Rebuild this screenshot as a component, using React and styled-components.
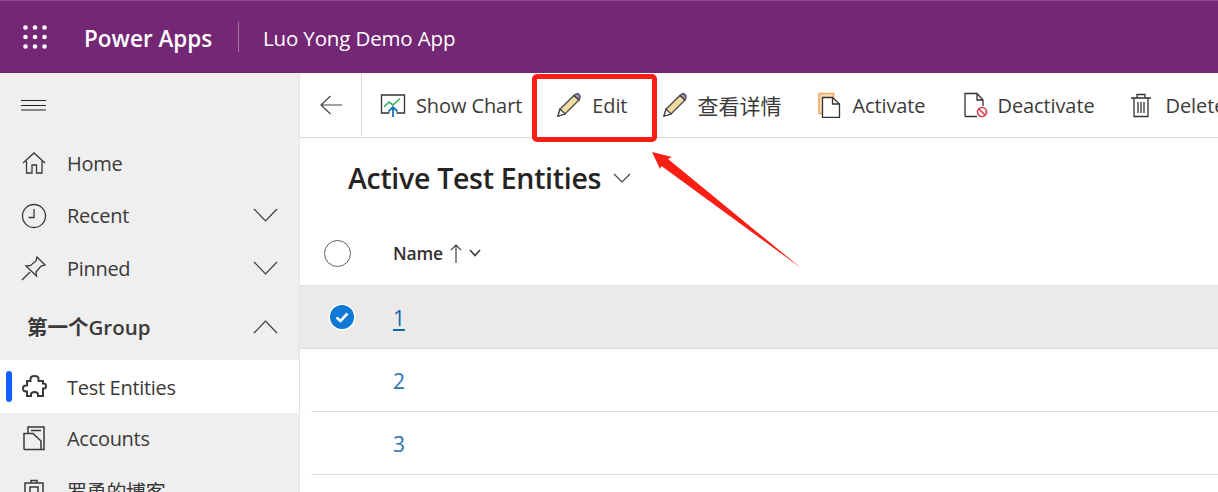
import React from "react";
import styled, { createGlobalStyle } from "styled-components";

const Global = createGlobalStyle`
  html, body { margin: 0; padding: 0; background: #fff; overflow: hidden; }
  * { box-sizing: border-box; }
  body { font-family: "Open Sans", "Noto Sans", "Noto Sans CJK SC", sans-serif; }
`;

const Page = styled.div`
  position: relative;
  width: 1218px;
  height: 492px;
  overflow: hidden;
  display: flex;
  flex-direction: column;
`;
const Header = styled.header`
  flex: 0 0 73px;
  background: #742774;
  border-top: 1px solid #8a4f8a;
  display: flex;
  align-items: center;
  color: #fff;
`;
const Waffle = styled.div`
  width: 70px;
  display: flex;
  justify-content: center;
`;
const Brand = styled.div`
  font-size: 22.5px;
  font-weight: 600;
  letter-spacing: 0;
  width: 168px;
  padding-left: 14px;
  padding-top: 2px;
  white-space: nowrap;
`;
const HeaderRule = styled.div`
  width: 1px;
  height: 30px;
  background: #a877a8;
  margin-right: 24px;
`;
const AppName = styled.div`
  font-size: 20.5px;
  letter-spacing: -0.15px;
  padding-top: 1px;
  white-space: nowrap;
`;
const Body = styled.div`
  flex: 1;
  display: flex;
  min-height: 0;
`;
const Sidebar = styled.nav`
  flex: 0 0 300px;
  background: #efefef;
  border-right: 1px solid #e4e4e4;
  display: flex;
  flex-direction: column;
  color: #3b3a39;
`;
const Burger = styled.div`
  flex: 0 0 64px;
  padding-left: 21px;
  display: flex;
  align-items: center;
`;
const NavRow = styled.div`
  flex: 0 0 ${p => p.$h || 52.5}px;
  position: relative;
  display: flex;
  align-items: center;
  padding-left: 21px;
  background: ${p => (p.$active ? "#fff" : "transparent")};
  padding-top: ${p => (p.$active ? 2 : 0)}px;
  font-size: 20px;
  letter-spacing: -0.3px;
  white-space: nowrap;
`;
const ActiveBar = styled.span`
  position: absolute;
  left: 6px;
  top: 11px;
  width: 6px;
  height: 31px;
  border-radius: 3px;
  background: #0f62fe;
`;
const NavIcon = styled.span`
  width: 26px;
  height: 26px;
  margin-right: 20px;
  display: flex;
  align-items: center;
  justify-content: center;
`;
const NavChevron = styled.span`
  margin-left: auto;
  margin-right: 21px;
  display: flex;
`;
const GroupRow = styled(NavRow)`
  padding-left: 27px;
  padding-bottom: 2px;
  font-size: 20.5px;
  font-weight: 600;
  letter-spacing: 0;
  flex-basis: 65px;
`;
const Main = styled.main`
  flex: 1;
  min-width: 0;
  display: flex;
  flex-direction: column;
`;
const CommandBar = styled.div`
  flex: 0 0 65px;
  border-bottom: 1px solid #d8d8d8;
  display: flex;
  align-items: center;
  font-size: 20px;
  color: #3b3a39;
  white-space: nowrap;
`;
const Back = styled.div`
  flex: 0 0 62px;
  height: 62px;
  border-right: 1px solid #d8d8d8;
  display: flex;
  align-items: center;
  justify-content: center;
`;
const Command = styled.div`
  flex: none;
  display: flex;
  align-items: center;
  gap: ${p => p.$gap || 9}px;
  margin-left: ${p => p.$ml || 0}px;
  letter-spacing: -0.1px;
`;
const CjkLabel = styled.span`
  font-size: 21px;
  letter-spacing: 0;
`;
const ViewTitle = styled.div`
  height: 82px;
  padding-left: 48px;
  display: flex;
  align-items: center;
  gap: 12px;
  font-size: 28.5px;
  font-weight: 600;
  letter-spacing: -0.3px;
  color: #252423;
  padding-bottom: 2px;
`;
const ColumnHead = styled.div`
  flex: 0 0 65px;
  padding-top: 1px;
  display: flex;
  align-items: center;
  font-size: 17.5px;
  font-weight: 600;
  letter-spacing: -0.2px;
  color: #323130;
`;
const HeadCircle = styled.span`
  width: 27px;
  height: 27px;
  margin-left: 24px;
  margin-right: 42px;
  border-radius: 50%;
  border: 1.6px solid #605e5c;
`;
const Row = styled.div`
  flex: 0 0 ${p => (p.$selected ? 64 : 63)}px;
  margin-left: ${p => (p.$selected ? 0 : 11)}px;
  padding-left: ${p => (p.$selected ? 30 : 0)}px;
  background: ${p => (p.$selected ? "#ebeae9" : "#fff")};
  border-top: ${p => (p.$selected ? "1px solid #e0e0e0" : "0")};
  border-bottom: 1px solid #dcdcdc;
  display: flex;
  align-items: center;
  font-size: 21px;
  color: ${p => (p.$selected ? "#1467a8" : "#2f73b5")};
`;
const Check = styled.span`
  flex: none;
  width: 24px;
  height: 24px;
  margin-right: 39px;
  display: flex;
  border-radius: 50%;
  box-shadow: 0 0 0 1.5px #fff;
`;
const RowLink = styled.span`
  margin-left: ${p => (p.$selected ? 0 : 82)}px;
  padding-top: 2px;
  text-decoration: ${p => (p.$selected ? "underline" : "none")};
  text-underline-offset: 3px;
`;
const Highlight = styled.div`
  position: absolute;
  left: 532px;
  top: 74px;
  width: 125px;
  height: 68px;
  border: 5px solid #fa1e14;
  border-radius: 5px;
  pointer-events: none;
`;
const Arrow = styled.svg`
  position: absolute;
  left: 650px;
  top: 150px;
`;

const Svg = ({ s = 26, children, ...r }) => (
  <svg width={s} height={s} viewBox="0 0 26 26" fill="none" stroke="#3b3a39" strokeWidth="1.3" {...r}>
    {children}
  </svg>
);
const Chevron = ({ up }) => (
  <svg width="25" height="15" viewBox="0 0 25 15" fill="none" stroke="#3b3a39" strokeWidth="1.2">
    <path d={up ? "M1 14 12.500 2 24 14" : "M1 1 12.500 13 24 1"} />
  </svg>
);
const Pencil = () => (
  <Svg>
    <path d="M3 24 5 17 19 3.500 24 8 10 22Z" fill="#f0dca0" stroke="#444" />
    <path d="M19 3.500 21 2Q22.500 1 24 2.500T24.800 6L24 8Z" fill="#a78fc0" stroke="#444" />
    <path d="M3 24 5 17 10 22Z" fill="#fff" stroke="#444" />
  </Svg>
);
const pts = [2.5, 12, 21.5];

export default function App() {
  return (
    <Page>
      <Global />
      <Header>
        <Waffle>
          <svg width="24" height="24" viewBox="0 0 24 24" fill="#fff">
            {pts.flatMap(y => pts.map(x => <circle key={x + "-" + y} cx={x} cy={y} r="2.3" />))}
          </svg>
        </Waffle>
        <Brand>Power Apps</Brand>
        <HeaderRule />
        <AppName>Luo Yong Demo App</AppName>
      </Header>
      <Body>
        <Sidebar>
          <Burger>
            <svg width="25" height="12" viewBox="0 0 25 12" stroke="#222" strokeWidth="1">
              <path d="M0 1.500H25M0 6.500H25M0 11H25" />
            </svg>
          </Burger>
          <NavRow>
            <NavIcon>
              <Svg><path d="M2 13 13 3 24 13M5.500 11V23H11V15H15.500V23H21V11" /></Svg>
            </NavIcon>
            Home
          </NavRow>
          <NavRow>
            <NavIcon>
              <Svg><circle cx="13" cy="13" r="11.500" /><path d="M13 6V14.500H7.500" /></Svg>
            </NavIcon>
            Recent
            <NavChevron><Chevron /></NavChevron>
          </NavRow>
          <NavRow>
            <NavIcon>
              <Svg><path d="M1 25 9 17M16 2 24 10 20 11 15 17 15.500 21 5 11 9.500 10.500 15 6Z" /></Svg>
            </NavIcon>
            Pinned
            <NavChevron><Chevron /></NavChevron>
          </NavRow>
          <GroupRow>
            第一个Group
            <NavChevron><Chevron up /></NavChevron>
          </GroupRow>
          <NavRow $active $h={53}>
            <ActiveBar />
            <NavIcon>
              <Svg strokeWidth="2"><path d="M6 7H9.500V5Q9.500 2 13.500 2T17.500 5V7H22V9.500H23Q25 9.500 25 12T23 14.500H22V22H17V20.500Q17 18 13.500 18T10 20.500V22H6V17.500H5Q2 17.500 2 14.500T5 11.500H6Z" /></Svg>
            </NavIcon>
            Test Entities
          </NavRow>
          <NavRow>
            <NavIcon>
              <Svg strokeWidth="1.5"><path d="M3 23.500H23V1H7V7.500M3 23.500V7.500H12L20 15V23.500M10 4.500H20" /></Svg>
            </NavIcon>
            Accounts
          </NavRow>
          <NavRow>
            <NavIcon>
              <Svg strokeWidth="1.5"><path d="M4 5H22V26H4ZM10 5V2.500H16V5M9 9H17V15H9Z" /></Svg>
            </NavIcon>
            罗勇的博客
          </NavRow>
        </Sidebar>
        <Main>
          <CommandBar>
            <Back>
              <svg width="22" height="20" viewBox="0 0 22 20" fill="none" stroke="#444" strokeWidth="1.2">
                <path d="M10.500 1 1 10 10.500 19M1 10H22" />
              </svg>
            </Back>
            <Command $ml={18} $gap={10}>
              <Svg>
                <path d="M9.500 21H1.500V3H24.500V21H16.500" stroke="#333" />
                <path d="M4 15 9 10 13 13 20 6.500" stroke="#35b05a" strokeWidth="1.600" />
                <path d="M13 25V15M8.500 19.500 13 15 17.500 19.500" stroke="#1a6fb5" strokeWidth="1.800" />
              </Svg>
              Show Chart
            </Command>
            <Command $ml={33} $gap={11}><Pencil />Edit</Command>
            <Command $ml={34} $gap={10}><Pencil /><CjkLabel>查看详情</CjkLabel></Command>
            <Command $ml={37} $gap={8}>
              <Svg>
                <rect x="1" y="1.500" width="14.500" height="20" stroke="#eeab66" strokeWidth="1.600" fill="#f8dcb4" />
                <path d="M4.500 5.500H14.500L21.500 12V25.500H4.500Z" fill="#fff" stroke="#333" />
                <path d="M14.500 5.500V12H21.500" stroke="#333" />
              </Svg>
              Activate
            </Command>
            <Command $ml={38} $gap={8}>
              <Svg>
                <path d="M2 24.500V1.500H14L20 8V14M14 1.500V8H20M2 24.500H14" stroke="#333" />
                <circle cx="19" cy="20" r="4.500" stroke="#d9434e" strokeWidth="1.700" />
                <path d="M16 17 22 23" stroke="#d9434e" strokeWidth="1.700" />
              </Svg>
              Deactivate
            </Command>
            <Command $ml={33} $gap={12}>
              <Svg>
                <path d="M3 6H23M9 6V2.500H17V6M6 6V24.500H20V6M10 10V21M13 10V21M16 10V21" stroke="#333" />
              </Svg>
              Delete
            </Command>
          </CommandBar>
          <ViewTitle>
            Active Test Entities
            <svg width="18" height="10" viewBox="0 0 18 10" fill="none" stroke="#444" strokeWidth="1.200">
              <path d="M1 1 9 9 17 1" />
            </svg>
          </ViewTitle>
          <ColumnHead>
            <HeadCircle />
            Name
            <svg style={{ marginLeft: 7 }} width="12" height="19" viewBox="0 0 12 19" fill="none" stroke="#444" strokeWidth="1.200">
              <path d="M6 19V1M1 6 6 1 11 6" />
            </svg>
            <svg style={{ marginLeft: 7 }} width="12" height="8" viewBox="0 0 12 8" fill="none" stroke="#444" strokeWidth="1.800">
              <path d="M1 1 6 6.500 11 1" />
            </svg>
          </ColumnHead>
          <Row $selected>
            <Check>
              <svg width="24" height="24" viewBox="0 0 24 24">
                <circle cx="12" cy="12" r="12" fill="#0f78d4" />
                <path d="M6.500 12.500 10.500 16 17.500 8.500" fill="none" stroke="#fff" strokeWidth="2.600" />
              </svg>
            </Check>
            <RowLink $selected>1</RowLink>
          </Row>
          <Row><RowLink>2</RowLink></Row>
          <Row><RowLink>3</RowLink></Row>
        </Main>
      </Body>
      <Highlight />
      <Arrow width="155" height="122" viewBox="0 0 155 122">
        <path d="M2 2 22 7 18 9 151 118 11.500 16 10 19Z" fill="#fa1e14" />
      </Arrow>
    </Page>
  );
}
